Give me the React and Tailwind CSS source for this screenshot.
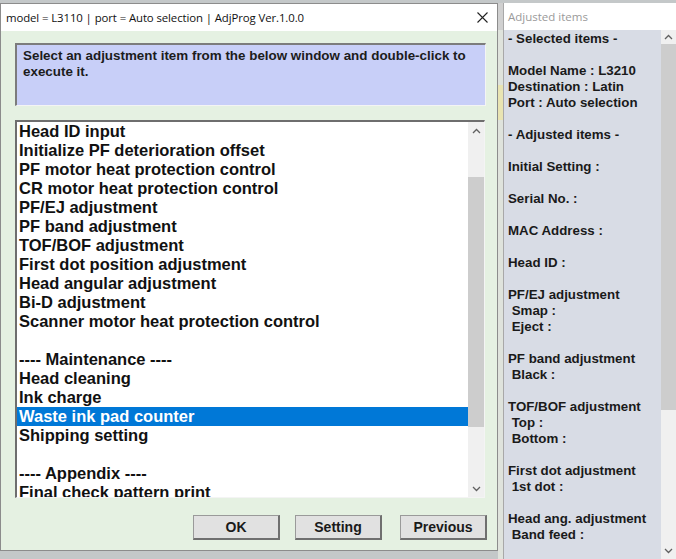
import React from "react";

const items = [
  "Head ID input",
  "Initialize PF deterioration offset",
  "PF motor heat protection control",
  "CR motor heat protection control",
  "PF/EJ adjustment",
  "PF band adjustment",
  "TOF/BOF adjustment",
  "First dot position adjustment",
  "Head angular adjustment",
  "Bi-D adjustment",
  "Scanner motor heat protection control",
  "",
  "---- Maintenance ----",
  "Head cleaning",
  "Ink charge",
  "Waste ink pad counter",
  "Shipping setting",
  "",
  "---- Appendix ----",
  "Final check pattern print",
];

const adjusted = [
  "- Selected items -",
  "",
  "Model Name : L3210",
  "Destination : Latin",
  "Port : Auto selection",
  "",
  "- Adjusted items -",
  "",
  "Initial Setting :",
  "",
  "Serial No. :",
  "",
  "MAC Address :",
  "",
  "Head ID :",
  "",
  "PF/EJ adjustment",
  " Smap :",
  " Eject :",
  "",
  "PF band adjustment",
  " Black :",
  "",
  "TOF/BOF adjustment",
  " Top :",
  " Bottom :",
  "",
  "First dot adjustment",
  " 1st dot :",
  "",
  "Head ang. adjustment",
  " Band feed :",
];

const Chevron = ({ up }) => (
  <svg width="9" height="6" viewBox="0 0 9 6" className="block">
    <polyline
      points={up ? "1,5 4.5,1.5 8,5" : "1,1 4.5,4.5 8,1"}
      fill="none"
      stroke="#606060"
      strokeWidth="1.3"
    />
  </svg>
);

const Button = ({ children, className = "" }) => (
  <div
    className={`w-[87px] h-[25px] flex items-center justify-center bg-[#e1e1e1] border border-[#9a9a9a] border-b-2 border-r-2 border-b-[#6f6f6f] border-r-[#6f6f6f] text-[14px] font-bold text-[#1a1a1a] ${className}`}
  >
    {children}
  </div>
);

export default function App() {
  return (
    <div className="w-[676px] h-[559px] overflow-hidden bg-[#c4c8c9] font-['Liberation_Sans',Arial,sans-serif] flex items-start pt-[3px]">
      {/* Adjustment dialog */}
      <div className="w-[498px] h-[548px] flex flex-col border border-[#8c8c8c] shrink-0">
        {/* Title */}
        <div className="h-[27px] bg-white flex items-center justify-between pl-[5px] pr-[9px] shrink-0">
          <span className="font-['Open_Sans',sans-serif] text-[11.4px] text-[#111] tracking-[-0.1px]">
            model = L3110 | port = Auto selection | AdjProg Ver.1.0.0
          </span>
          <svg width="11" height="11" viewBox="0 0 11 11">
            <path d="M0.5 0.5 L10.5 10.5 M10.5 0.5 L0.5 10.5" stroke="#222" strokeWidth="1.1" />
          </svg>
        </div>

        {/* Body */}
        <div className="flex-1 bg-[#e5f1e2] pl-[14px] pr-[10px] pt-[12px] flex flex-col">
          <div className="h-[63px] mr-[1px] bg-[#c8cff8] border-t-2 border-l-2 border-[#7c7c7c] border-b border-r border-b-[#f4f4f4] border-r-[#f4f4f4] px-[6px] pt-[3px] text-[13.4px] leading-[16px] font-bold text-[#1c1c1c]">
            Select an adjustment item from the below window and double-click to execute it.
          </div>

          <div className="mt-[14px] h-[378px] mr-[2px] bg-white border-t-2 border-l-2 border-[#6e6e6e] border-b border-r border-b-[#f4f4f4] border-r-[#f4f4f4] flex">
            <div className="flex-1 overflow-hidden">
              {items.map((t, i) => (
                <div
                  key={i}
                  className={
                    t === "Waste ink pad counter"
                      ? "h-[19px] leading-[19px] pl-[2px] text-[16.5px] font-bold bg-[#0078d7] text-white whitespace-nowrap"
                      : "h-[19px] leading-[19px] pl-[2px] text-[16.5px] font-bold text-[#111] whitespace-nowrap"
                  }
                >
                  {t}
                </div>
              ))}
            </div>
            <div className="w-[16px] bg-[#f0f0f0] flex flex-col items-center">
              <div className="h-[17px] flex items-center justify-center">
                <Chevron up />
              </div>
              <div className="mt-[38px] h-[250px] w-full bg-[#cdcdcd]" />
              <div className="flex-1" />
              <div className="h-[17px] flex items-center justify-center">
                <Chevron />
              </div>
            </div>
          </div>

          <div className="mt-[17px] flex justify-end">
            <Button className="mr-[15px]">OK</Button>
            <Button className="mr-[18px]">Setting</Button>
            <Button>Previous</Button>
          </div>
        </div>
      </div>

      {/* gap between windows */}
      <div className="w-[5px] h-[556px] bg-[#dfe3dc] flex flex-col shrink-0">
        <div className="h-[27px] bg-[#d0d0d0]" />
        <div className="mt-[55px] h-[35px] bg-[#e9e4b2]" />
      </div>

      {/* Adjusted items window */}
      <div className="flex-1 h-[556px] flex flex-col border-l border-[#a8a8a8]">
        <div className="h-[27px] bg-white flex items-center pl-[4px] shrink-0">
          <span className="font-['Open_Sans',sans-serif] text-[11.5px] text-[#9a9a9a]">Adjusted items</span>
        </div>
        <div className="flex-1 flex">
          <div className="flex-1 bg-[#d8dce5] pl-[4px] pt-[1px] overflow-hidden">
            {adjusted.map((t, i) => (
              <div
                key={i}
                className="h-[16px] leading-[16px] text-[13.3px] font-bold text-[#1a1a1a] whitespace-pre"
              >
                {t}
              </div>
            ))}
          </div>
          <div className="w-[15px] bg-[#f0f0f0] flex flex-col items-center">
            <div className="h-[14px] flex items-center justify-center">
              <Chevron up />
            </div>
            <div className="h-[366px] w-full bg-[#cdcdcd]" />
            <div className="flex-1" />
            <div className="h-[16px] flex items-center justify-center">
              <Chevron />
            </div>
          </div>
        </div>
      </div>
    </div>
  );
}
